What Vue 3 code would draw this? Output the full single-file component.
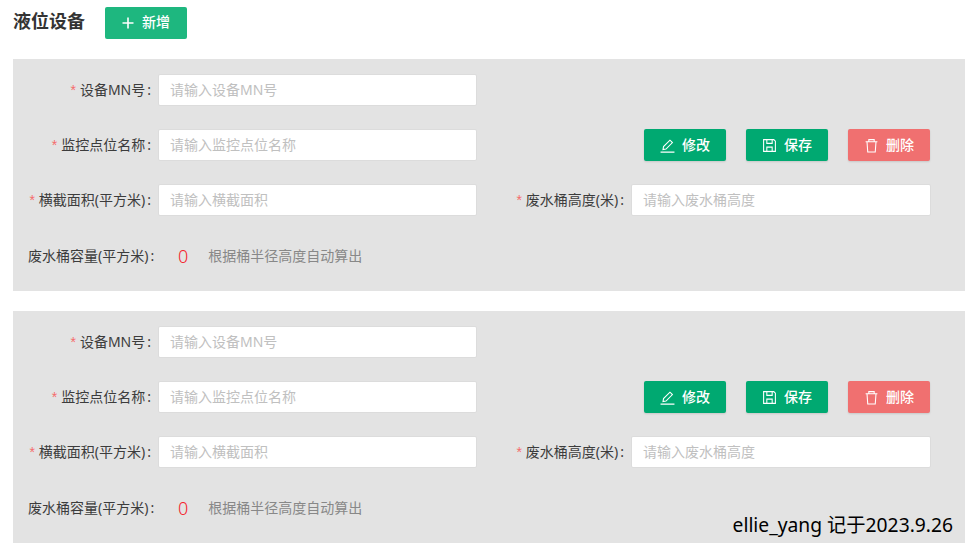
<script setup>
const panels = [0, 1]
</script>

<template>
  <div class="page">
    <header class="head">
      <h1 class="title">液位设备</h1>
      <button class="btn add">
        <svg class="plus" width="12" height="12" viewBox="0 0 12 12"><path d="M6 .5v11M.5 6h11" stroke="#fff" stroke-width="1.6" fill="none"/></svg>
        <span>新增</span>
      </button>
    </header>
    <section v-for="p in panels" :key="p" class="panel">
      <div class="row">
        <label class="label"><i>*</i>设备MN号<b>:</b></label>
        <input class="input wide" placeholder="请输入设备MN号" />
      </div>
      <div class="row">
        <label class="label"><i>*</i>监控点位名称<b>:</b></label>
        <input class="input wide" placeholder="请输入监控点位名称" />
        <div class="actions">
          <button class="btn act green">
            <svg width="15" height="15" viewBox="0 0 14 14" fill="none" stroke="#fff" stroke-width="1"><path d="M.5 13.200h13M2.800 10.800l.5-2.800 6-6 2.300 2.300-6 6z"/></svg>
            <span>修改</span>
          </button>
          <button class="btn act green">
            <svg width="15" height="15" viewBox="0 0 14 14" fill="none" stroke="#fff" stroke-width="1"><path d="M1.500 1.500h9.500l1.500 1.500v9.500h-11zM4.500 1.500v3.500h5v-3.500M4.500 12.500v-4h5v4"/></svg>
            <span>保存</span>
          </button>
          <button class="btn act red">
            <svg width="15" height="15" viewBox="0 0 14 14" fill="none" stroke="#fff" stroke-width="1"><path d="M1.500 3.500h11M4.500 3.500v-2h5v2M2.800 3.500l.7 9.500h7l.7-9.500"/></svg>
            <span>删除</span>
          </button>
        </div>
      </div>
      <div class="row">
        <label class="label"><i>*</i>横截面积(平方米)<b>:</b></label>
        <input class="input wide" placeholder="请输入横截面积" />
        <label class="label second"><i>*</i>废水桶高度(米)<b>:</b></label>
        <input class="input narrow" placeholder="请输入废水桶高度" />
      </div>
      <div class="row calc">
        <span class="calc-label">废水桶容量(平方米)<b>:</b></span>
        <span class="zero">0</span>
        <span class="hint">根据桶半径高度自动算出</span>
      </div>
    </section>
    <div class="mark">ellie_yang 记于2023.9.26</div>
  </div>
</template>

<style>
html, body { margin: 0; background: #fff; }
</style>

<style scoped>
.page {
  position: relative;
  width: 974px;
  height: 552px;
  overflow: hidden;
  padding: 7px 9px 0 13px;
  box-sizing: border-box;
  font-family: "Noto Sans", "Noto Sans CJK SC", sans-serif;
}
.head {
  display: flex;
  align-items: center;
  gap: 20px;
  height: 32px;
  margin-bottom: 20px;
}
.title {
  margin: 0 0 3px;
  font-size: 18px;
  font-weight: 700;
  color: #333;
  line-height: 29px;
}
.btn {
  display: flex;
  align-items: center;
  justify-content: center;
  border: 0;
  border-radius: 2px;
  height: 32px;
  width: 82px;
  color: #fff;
  font-family: inherit;
  font-size: 14px;
  line-height: 20px;
  font-weight: 500;
  padding: 0;
}
.add { background: #1eb77f; gap: 8px; }
.add span { margin-top: -2px; }
.act { gap: 7px; box-shadow: 0 1px 2px rgba(0,0,0,.12); }
.green { background: #00a971; }
.red { background: #f07070; }
.panel {
  width: 952px;
  height: 232px;
  background: #e3e3e3;
  padding-top: 15px;
  box-sizing: border-box;
  margin-bottom: 20px;
  display: flex;
  flex-direction: column;
  gap: 23px;
}
.row {
  display: flex;
  align-items: center;
  height: 32px;
}
.label {
  width: 138px;
  margin-right: 7px;
  text-align: right;
  font-size: 14px;
  line-height: 20px;
  color: #3c3c3c;
  white-space: nowrap;
}
.label i {
  color: #f56c6c;
  font-style: normal;
  margin-right: 4px;
  font-family: "Liberation Sans", sans-serif;
}
b {
  font-weight: 400;
  margin-left: 2px;
}
.label.second {
  width: 147px;
}
.input {
  height: 32px;
  box-sizing: border-box;
  border: 1px solid #dcdcdc;
  border-radius: 2px;
  background: #fff;
  padding: 0 11px 2px;
  font-family: inherit;
  font-size: 14px;
  color: #333;
  outline: none;
}
.input::placeholder { color: #c0c0c0; }
.wide { width: 319px; }
.narrow { width: 300px; }
.actions {
  display: flex;
  gap: 20px;
  margin-left: 167px;
}
.calc { margin-top: 1px; font-size: 14px; line-height: 20px; }
.calc-label {
  margin-left: 15px;
  color: #3c3c3c;
  white-space: nowrap;
}
.zero {
  width: 54px;
  padding-left: 4px;
  box-sizing: border-box;
  text-align: center;
  color: #f5222d;
  font-size: 18px;
  font-weight: 300;
  line-height: 20px;
}
.hint { color: #888; }
.mark {
  position: absolute;
  right: 21px;
  bottom: 16px;
  font-family: "Noto Sans", "Noto Sans CJK SC", sans-serif;
  font-size: 19.25px;
  line-height: 22px;
  color: #000;
}
</style>
